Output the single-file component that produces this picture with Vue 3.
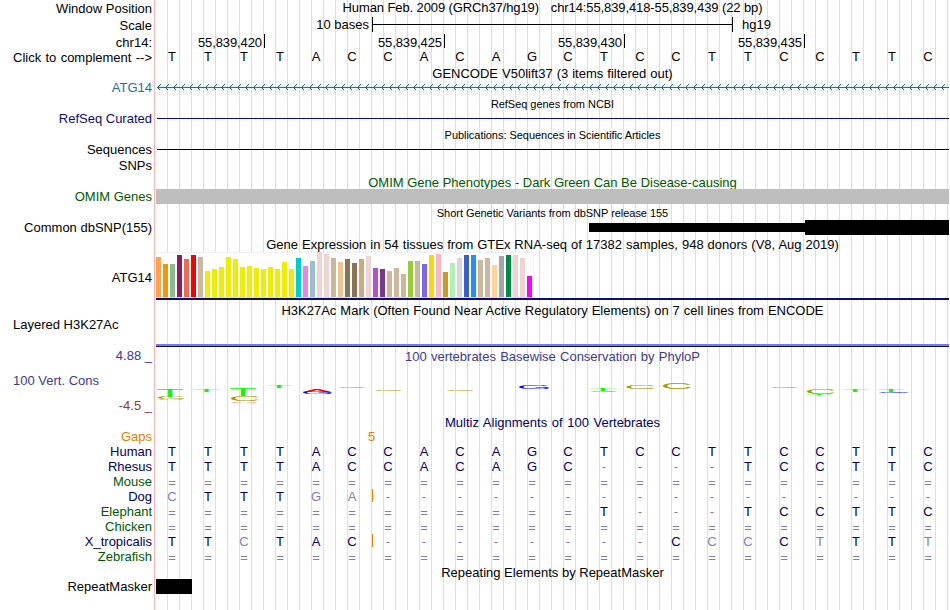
<script setup>
import { computed } from "vue";

// 22 bases, 36px each
const bases = "TTTTACCACAGCTCCTTCCTTC";
const positions = ["55,839,420", "55,839,425", "55,839,430", "55,839,435"];

// lower case: base differs from human
const species = [
  { name: "Human", seq: "TTTTACCACAGCTCCTTCCTTC" },
  { name: "Rhesus", seq: "TTTTACCACAGC----TCCTTC" },
  { name: "Mouse", seq: "======================", far: true },
  { name: "Dog", seq: "cTTTga----------------", gap: true },
  { name: "Elephant", seq: "============T---TCCTTC", far: true },
  { name: "Chicken", seq: "======================", far: true },
  { name: "X_tropicalis", seq: "TTcTAC--------CccCtTTt", gap: true },
  { name: "Zebrafish", seq: "======================", far: true },
];

const baseClass = (b) => ({
  light: b !== b.toUpperCase(),
  none: b === "-" || b === "=",
  low: b === "=",
});

// [color, height] for each GTEx tissue
const tissues = [
  ["#ffa54f", 40], ["#ee9a00", 33], ["#8fbc8f", 33], ["#8b1c62", 42],
  ["#ee6a50", 38], ["#ff0000", 42], ["#cdb79e", 40], ["#eeee00", 26],
  ["#eeee00", 28], ["#eeee00", 30], ["#eeee00", 40], ["#eeee00", 38],
  ["#eeee00", 30], ["#eeee00", 31], ["#eeee00", 29], ["#eeee00", 28],
  ["#eeee00", 30], ["#eeee00", 28], ["#eeee00", 35], ["#eeee00", 28],
  ["#00cdcd", 39], ["#ee82ee", 31], ["#9ac0cd", 36], ["#eed5d2", 45],
  ["#eed5d2", 43], ["#cdb79e", 39], ["#eec591", 35], ["#8b7355", 38],
  ["#8b7355", 34], ["#cdaa7d", 38], ["#eed5d2", 41], ["#b452cd", 29],
  ["#7a378b", 28], ["#cdb79e", 26], ["#cdb79e", 29], ["#cdb79e", 23],
  ["#9acd32", 36], ["#cdb79e", 36], ["#7a67ee", 33], ["#ffd700", 42],
  ["#ffb6c1", 43], ["#cd9b1d", 25], ["#b4eeb4", 34], ["#d9d9d9", 39],
  ["#3a5fcd", 42], ["#1e90ff", 42], ["#cdb79e", 37], ["#cdb79e", 39],
  ["#ffd39b", 32], ["#a6a6a6", 41], ["#008b45", 42], ["#eed5d2", 42],
  ["#eed5d2", 39], ["#ff00ff", 21],
];

// strand arrows on the gene line, one every 8px
const arrows = computed(() =>
  Array.from({ length: 99 }, (_, i) => `M${4.5 + i * 8} 0.5l-3 3l3 3`).join("")
);

// conservation logo: letter, left, width, top, height
const logo = [
  ["T", 1, 26, 14, 8], ["C", 2, 27, 22, 2.2], ["A", 2, 26, 24, 1.2],
  ["T", 37.5, 26, 14, 2.7],
  ["T", 74, 26, 14, 7], ["C", 75, 28, 20.8, 5.4], ["A", 75, 27, 26, 1.6],
  ["T", 110, 26, 10, 3],
  ["A", 146.5, 29, 14, 3], ["G", 147, 29, 17, 2],
  ["C", 183, 27.5, 12, 1],
  ["C", 219, 28, 14, 1.8],
  ["C", 291, 28, 14, 1.8],
  ["G", 363, 30, 10, 4],
  ["T", 434, 26, 14, 2], ["C", 435, 27, 16, 1],
  ["C", 470.5, 28, 10, 4],
  ["C", 507, 28, 7.8, 6],
  ["C", 615, 28, 12, 1],
  ["C", 651, 28, 14, 5], ["T", 650, 26, 19, 1],
  ["T", 686, 26, 14, 3],
  ["T", 722, 26, 14, 3], ["G", 723, 30, 17, 1],
];
// glyph box of each letter at font-size 100: left, width, height
const glyphs = {
  T: [2.1, 56.8, 68.8],
  C: [5, 63.2, 70.8],
  A: [0.4, 65.9, 68.8],
  G: [5, 66.9, 70.8],
};
const logoLetters = computed(() =>
  logo.map(([char, x, w, y, h]) => {
    const [left, gw, gh] = glyphs[char];
    const sx = w / gw;
    const sy = h / gh;
    const base = char === "C" || char === "G" ? h - sy : h;
    return {
      char,
      transform: `matrix(${sx} 0 0 ${sy} ${x - left * sx} ${y + base})`,
    };
  })
);
</script>

<template>
  <div class="browser">
    <div class="row position">
      <div class="label down">Window Position</div>
      <div class="data">
        <div class="title assembly">
          <span>Human Feb. 2009 (GRCh37/hg19)</span>
          <span>chr14:55,839,418-55,839,439 (22 bp)</span>
        </div>
      </div>
    </div>

    <div class="row scale">
      <div class="label down">Scale</div>
      <div class="data">
        <span class="scale-text">10 bases</span>
        <span class="scale-bar"></span>
        <span>hg19</span>
      </div>
    </div>

    <div class="row ruler">
      <div class="label down">chr14:</div>
      <div class="data">
        <span v-for="p in positions" :key="p" class="tick">{{ p }}</span>
      </div>
    </div>

    <div class="row complement">
      <div class="label">Click to complement --&gt;</div>
      <div class="data seq">
        <span v-for="(b, i) in bases" :key="i">{{ b }}</span>
      </div>
    </div>

    <div class="title gencode">GENCODE V50lift37 (3 items filtered out)</div>
    <div class="row gene">
      <div class="label blue">ATG14</div>
      <div class="data">
        <svg width="793" height="7" viewBox="0 0 793 7">
          <path d="M1 3.5H793" />
          <path :d="arrows" />
        </svg>
      </div>
    </div>

    <div class="title small refseq">RefSeq genes from NCBI</div>
    <div class="row">
      <div class="label navy">RefSeq Curated</div>
      <div class="data"><div class="line navy-line"></div></div>
    </div>

    <div class="title small pubs">
      Publications: Sequences in Scientific Articles
    </div>
    <div class="row">
      <div class="label">Sequences</div>
      <div class="data"><div class="line"></div></div>
    </div>
    <div class="row snps">
      <div class="label">SNPs</div>
    </div>

    <div class="title green omim">
      OMIM Gene Phenotypes - Dark Green Can Be Disease-causing
    </div>
    <div class="row">
      <div class="label green">OMIM Genes</div>
      <div class="data"><div class="omim-bar"></div></div>
    </div>

    <div class="title small dbsnp">
      Short Genetic Variants from dbSNP release 155
    </div>
    <div class="row">
      <div class="label">Common dbSNP(155)</div>
      <div class="data snp">
        <div class="snp-thin"></div>
        <div class="snp-thick"></div>
      </div>
    </div>

    <div class="title gtex">
      Gene Expression in 54 tissues from GTEx RNA-seq of 17382 samples, 948
      donors (V8, Aug 2019)
    </div>
    <div class="row expression">
      <div class="label">ATG14</div>
      <div class="data">
        <div class="tissues">
          <span
            v-for="([color, height], i) in tissues"
            :key="i"
            :style="{ background: color, height: height + 'px' }"
          ></span>
        </div>
      </div>
    </div>

    <div class="title h3k">
      H3K27Ac Mark (Often Found Near Active Regulatory Elements) on 7 cell lines
      from ENCODE
    </div>
    <div class="row layered">
      <div class="label left">Layered H3K27Ac</div>
      <div class="data"></div>
    </div>

    <div class="row phylop">
      <div class="label limits">
        <span>4.88 _</span>
        <span class="left">100 Vert. Cons</span>
        <span class="min">-4.5 _</span>
      </div>
      <div class="data">
        <div class="title cons">
          100 vertebrates Basewise Conservation by PhyloP
        </div>
        <svg class="logo" width="793" height="34" viewBox="0 0 793 34">
          <text
            v-for="(l, i) in logoLetters"
            :key="i"
            :class="l.char"
            :transform="l.transform"
          >
            {{ l.char }}
          </text>
        </svg>
      </div>
    </div>

    <div class="title multiz">Multiz Alignments of 100 Vertebrates</div>
    <div class="row">
      <div class="label orange">Gaps</div>
      <div class="data"><span class="gap-count">5</span></div>
    </div>
    <div v-for="s in species" :key="s.name" class="row">
      <div class="label" :class="s.far ? 'green' : 'human'">{{ s.name }}</div>
      <div class="data seq align" :class="{ gap: s.gap }">
        <span v-for="(b, i) in s.seq" :key="i" :class="baseClass(b)">{{
          b.toUpperCase()
        }}</span>
      </div>
    </div>

    <div class="title repeat">Repeating Elements by RepeatMasker</div>
    <div class="row">
      <div class="label">RepeatMasker</div>
      <div class="data"><div class="repeat-bar"></div></div>
    </div>
  </div>
</template>

<style>
body {
  margin: 0;
  background: #fff;
}
</style>

<style scoped>
.browser {
  box-sizing: border-box;
  width: 949px;
  height: 610px;
  overflow: hidden;
  font: 13px/15px "Liberation Sans", Arial, Helvetica, sans-serif;
  color: #000;
  white-space: nowrap;
  background: linear-gradient(#ffb4b4, #ffb4b4) 154px 0 / 1px 100% no-repeat,
    repeating-linear-gradient(
        90deg,
        #dcdcfa 0,
        #dcdcfa 1px,
        transparent 1px,
        transparent 12px
      )
      167px 0 / 792px 100% no-repeat;
}
.row {
  display: flex;
  height: 15px;
}
.label {
  width: 152px;
  flex: none;
  margin-right: 4px;
  text-align: right;
}
.down {
  padding-top: 1px;
}
.left {
  box-sizing: border-box;
  padding-left: 13px;
  text-align: left;
}
.data {
  flex: 1;
  min-width: 0;
}
.title {
  height: 15px;
  margin-left: 156px;
  text-align: center;
}
.data .title {
  margin-left: 0;
}
.small {
  font-size: 11px;
  letter-spacing: -0.04px;
}
.blue {
  color: #1a6fae;
}
.navy {
  color: #0c0c78;
}
.human,
.multiz {
  color: #000064;
}
.green {
  color: #005a00;
}
.orange {
  color: #e68200;
}

.position,
.scale {
  height: 17px;
}
.assembly {
  display: flex;
  justify-content: center;
  gap: 12px;
  letter-spacing: -0.11px;
}
.scale .data {
  display: flex;
  padding-left: 160px;
}
.scale-text {
  width: 53px;
  text-align: right;
}
.scale-bar {
  width: 359px;
  height: 15px;
  margin: 0 9px 0 3px;
  border: solid #000;
  border-width: 0 1px;
  background: linear-gradient(#000, #000) 0 7px / 100% 1px no-repeat;
}
.ruler {
  height: 16px;
}
.ruler .data {
  display: flex;
}
.tick {
  width: 106px;
  height: 14px;
  padding-right: 2px;
  line-height: 17px;
  letter-spacing: -0.1px;
  text-align: right;
  border-right: 1px solid #000;
}
.tick + .tick {
  width: 177px;
}
.complement {
  height: 16px;
}
.complement .label {
  word-spacing: 0.7px;
}
.seq {
  display: flex;
  margin-left: -2px;
}
.seq span {
  width: 36px;
  text-align: center;
}
.complement .seq {
  line-height: 13px;
}

.gencode {
  height: 14px;
  word-spacing: 0.4px;
}
.gene svg {
  display: block;
  margin-top: 4px;
  fill: none;
  stroke: #1a6fae;
  shape-rendering: crispEdges;
}
.refseq {
  height: 14px;
  margin-top: 2px;
}
.pubs {
  margin-top: 1px;
}
.pubs,
.dbsnp {
  line-height: 17px;
}
.snps {
  margin-top: 1px;
  height: 17px;
}
.line {
  height: 1px;
  margin: 7px 0 0 1px;
  background: #000;
}
.navy-line {
  background: #0c0c78;
}
.omim {
  height: 14px;
}
.omim + .row {
  height: 16px;
}
.omim-bar {
  height: 15px;
  background: #bebebe;
}
.snp {
  display: flex;
  align-items: center;
  justify-content: flex-end;
}
.snp-thin {
  width: 216px;
  height: 9px;
  background: #000;
}
.snp-thick {
  width: 144px;
  height: 15px;
  background: #000;
}
.gtex {
  margin-top: 2px;
  word-spacing: 0.35px;
}
.expression {
  height: 48px;
}
.expression .label {
  padding-top: 18px;
}
.expression .data {
  border-bottom: 2px solid #0c0c78;
}
.tissues {
  box-sizing: border-box;
  display: flex;
  align-items: flex-end;
  gap: 2px;
  width: 378px;
  height: 46px;
  background: #fff;
  border: solid #f2f2f2;
  border-width: 1px 1px 1px 0;
  border-bottom-color: #dcdcdc;
}
.tissues span {
  width: 5px;
}
.h3k {
  margin-top: 3px;
  height: 14px;
  word-spacing: 0.35px;
}
.layered {
  height: 30px;
}
.layered .data {
  box-sizing: border-box;
  border-bottom: 1px solid #101040;
  box-shadow: inset 0 -2px #7878ff;
}
.phylop {
  height: 68px;
}
.limits {
  display: flex;
  flex-direction: column;
  gap: 10px;
  padding-top: 1px;
  color: #3c3c8c;
}
.min {
  color: #8c3c3c;
}
.cons {
  margin-top: 2px;
  color: #3c3c8c;
  word-spacing: 0.6px;
}
.logo {
  display: block;
  margin-top: 11px;
  font-size: 100px;
}
.T {
  fill: #00ff00;
}
.C {
  fill: #a0a000;
}
.A {
  fill: #ff0000;
}
.G {
  fill: #0000ff;
}
.multiz {
  height: 14px;
  word-spacing: 1px;
}
.gap-count {
  padding-left: 212px;
  color: #e68200;
}
.align {
  color: #000064;
}
.align .light,
.align .none {
  color: #8080b2;
}
.align .low {
  padding-top: 1px;
}
.gap {
  background: linear-gradient(#e68200, #e68200) 218px 0 / 1px 13px no-repeat;
}
.repeat {
  margin-top: 1px;
  height: 14px;
}
.repeat-bar {
  width: 36px;
  height: 15px;
  background: #000;
}
</style>
